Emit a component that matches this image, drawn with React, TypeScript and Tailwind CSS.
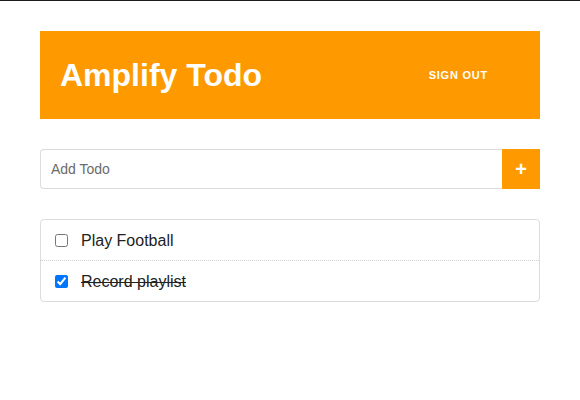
import { useState } from 'react';

const initialTodos = [
  { id: 1, name: 'Play Football', done: false },
  { id: 2, name: 'Record playlist', done: true },
];

export default function App() {
  const [todos, setTodos] = useState(initialTodos);

  const toggle = (id: number) =>
    setTodos(todos.map(t => (t.id === id ? { ...t, done: !t.done } : t)));

  return (
    <div className="min-h-[400px] bg-white border-t border-[#1e1a1f] font-['Liberation_Sans',Arial,sans-serif]">
      <div className="px-10 pt-[30px]">
        <div className="h-[88px] bg-[#ff9900] flex items-center justify-between pl-[20px] pr-[52px]">
          <h1 className="text-[32px] font-bold text-white leading-none">Amplify Todo</h1>
          <button className="text-[11px] font-bold text-white tracking-[0.07em] uppercase">Sign out</button>
        </div>

        <div className="mt-[30px] flex h-10">
          <input
            placeholder="Add Todo"
            className="flex-1 border border-[#dcdcdc] border-r-0 rounded-l-[4px] px-[10px] text-[14px] text-gray-700 placeholder:text-[#6b6b6b] outline-none"
          />
          <button className="w-[38px] bg-[#ff9900] text-white text-[20px] font-bold leading-none flex items-center justify-center">+</button>
        </div>

        <ul className="mt-[30px] border border-[#dcdcdc] rounded-[4px]">
          {todos.map((t, i) => (
            <li
              key={t.id}
              className={`flex items-center pl-[14px] gap-[13px] pt-px ${i > 0 ? 'h-[41px] border-t border-dotted border-[#d4d4d4]' : 'h-10'}`}
            >
              <input type="checkbox" checked={t.done} onChange={() => toggle(t.id)} className="w-[13px] h-[13px] m-0" />
              <span className={`text-[16px] text-[#222] ${t.done ? 'line-through' : ''}`}>{t.name}</span>
            </li>
          ))}
        </ul>
      </div>
    </div>
  );
}
